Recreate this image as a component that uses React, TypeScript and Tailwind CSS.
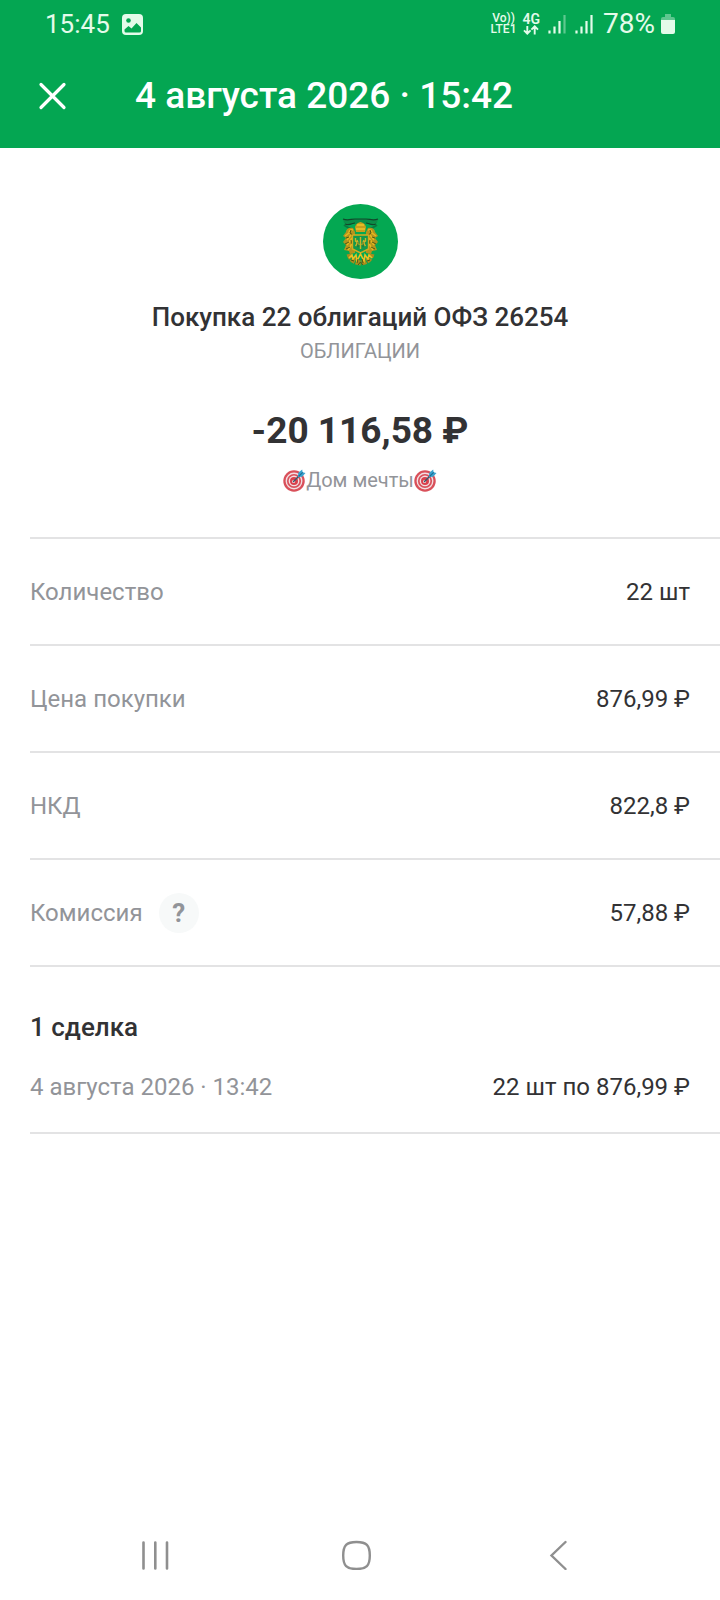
import type { ReactNode } from "react";

function Target() {
  return (
    <svg viewBox="0 0 24 24" className="size-[23px] shrink-0" role="img" aria-label="🎯">
      <circle cx="11.5" cy="12.5" r="11.2" fill="#d9505a" />
      <circle cx="11.5" cy="12.5" r="8.8" fill="#f3dfe2" />
      <circle cx="11.5" cy="12.5" r="7.4" fill="#d9505a" />
      <circle cx="11.5" cy="12.5" r="5.6" fill="#f3dfe2" />
      <circle cx="11.5" cy="12.5" r="4.2" fill="#d9404c" />
      <circle cx="11" cy="13" r="1.6" fill="#f3dfe2" />
      <path d="M11 13 18.5 5.5" stroke="#39586b" strokeWidth="1.6" strokeLinecap="round" />
      <path d="M15.500 8.300 16 3.800 20 .4l.5 3 3 .7-3.500 4Z" fill="#38a3cf" />
      <path d="m16.400 7.600 4.200-4" stroke="#1f6f96" strokeWidth="1.200" />
    </svg>
  );
}

function Emblem() {
  return (
    <svg viewBox="0 0 75 75" className="size-[75px]" role="img" aria-label="ОФЗ">
      <circle cx="37.5" cy="37.5" r="37.5" fill="#04a852" />
      <path d="M20 15c5 2 8 0 12 0h11c4 0 7 2 12 0l-1 4c-5 3-8 0-12 1h-9c-4-1-7 2-12-1Z" fill="#0b8d48" />
      <path d="M20 15c5 2 8 0 12 0h11c4 0 7 2 12 0M22 20c5 2 7-1 10-1m21 1c-5 2-7-1-10-1" stroke="#12472a" strokeWidth="1.2" fill="none" />
      <path d="M21 21q4 3 8 4m25-4q-4 3-8 4" stroke="#0b7a3e" strokeWidth="2" fill="none" />
      <path d="M32 23q1-4 5.500-5 4.500 1 5.500 5l-1 5h-9Z" fill="#c99f1c" />
      <path d="M34 21h7M33 25h9" stroke="#efc52a" strokeWidth="1.600" />
      <path d="M30 24c-4-1-7 1-7 4l-3 4 3 2-3 4 3 3-2 5 5 1 1 3 5-1V28Z" fill="#b4931d" />
      <path d="M45 24c4-1 7 1 7 4l3 4-3 2 3 4-3 3 2 5-5 1-1 3-5-1V28Z" fill="#b4931d" />
      <g stroke="#e6b81f" strokeWidth="1.500" fill="none">
        <path d="M30 26q-4-1-4 3l-4 3m6-1-4 5m5-2-5 7m6-3-5 8" />
        <path d="M45 26q4-1 4 3l4 3m-6-1 4 5m-5-2 5 7m-6-3 5 8" />
      </g>
      <g stroke="#4d5a17" strokeWidth="1" fill="none">
        <path d="m28 26-1 3 3 2m-7 3 3-1m-4 7 4-2m-3 7 4-2m1-7 1 4" />
        <path d="m47 26 1 3-3 2m7 3-3-1m4 7-4-2m3 7-4-2m-1-7-1 4" />
      </g>
      <path d="M29.500 31h16v14l-8 4-8-4Z" fill="#12994b" stroke="#d3aa20" strokeWidth="1.400" />
      <path d="M32.500 34v3q3 1 0 5m5-9v12m5-11v3q-3 1 0 5M34 36l2 5m5-5-2 5" stroke="#c9b32a" strokeWidth="1.400" fill="none" />
      <path d="M35 38v5m5-5v5" stroke="#33621f" strokeWidth=".8" />
      <path d="M26 50q2 8 11.500 9Q47 58 49 50" stroke="#a98c1c" strokeWidth="5" strokeDasharray="4.500 1" fill="none" />
      <path d="m26 54 3-3 1 4 3-4 1 6 3.500-7 3.500 7 1-6 3 4 1-4 3 3" stroke="#ecc023" strokeWidth="1.600" fill="none" />
      <path d="m28 56 3 1m3 2 1-4m5 4-1-4m5 2 3-1m-12 5 2.500-3 2.500 3" stroke="#4f5717" strokeWidth="1" fill="none" />
    </svg>
  );
}

function Signal({ weak = false }: { weak?: boolean }) {
  return (
    <svg viewBox="0 0 18 20" className="h-5 w-[18px]" aria-hidden="true" stroke="#e4fbea" strokeWidth="2.200">
      <path d="M1.500 16.500V19.500M6.500 12.500V19.500M11.500 7V19.500" />
      <path d="M16.500 1V19.500" opacity={weak ? 0.4 : 1} />
    </svg>
  );
}

function StatusBar() {
  return (
    <div className="flex h-12 items-center justify-between pr-[45px] pl-[45px] text-[#e4fbea]">
      <div className="flex items-center gap-3">
        <span className="text-[26px] leading-8">15:45</span>
        <svg viewBox="0 0 21 21" className="size-[21px]" role="img" aria-label="Изображение">
          <rect width="21" height="21" rx="4" fill="#e4fbea" />
          <circle cx="6.500" cy="6.500" r="2.300" fill="#04a652" />
          <path d="m2.500 15.500 4-3.500 3 2.500 5-5.500 4.500 4.500v3.500q0 1.500-1.500 1.500h-13.500q-1.500 0-1.500-1.500Z" fill="#04a652" />
        </svg>
      </div>
      <div className="flex items-center">
        <div className="flex flex-col items-center text-[12px] leading-[11px] font-medium">
          <span>Vo))</span>
          <span>LTE1</span>
        </div>
        <div className="ml-1.5 flex flex-col items-center">
          <span className="text-[14px] leading-[12px] font-semibold">4G</span>
          <svg viewBox="0 0 16 10" className="h-2.5 w-4" fill="none" stroke="#e4fbea" strokeWidth="1.900" aria-hidden="true">
            <path d="M4.300 1v7.500M1 5.300l3.300 3.300 3.300-3.300M11.700 9.500V1.500M8.400 4.700l3.300-3.300L15 4.700" />
          </svg>
        </div>
        <div className="ml-2 flex gap-[9px]">
          <Signal weak />
          <Signal />
        </div>
        <span className="ml-2.5 text-[28px] leading-8">78%</span>
        <svg viewBox="0 0 14 20" className="ml-1.5 h-5 w-3.5" role="img" aria-label="Батарея">
          <path d="M4 0h6v3h2q2 0 2 2v3H0V5q0-2 2-2h2Z" fill="#e4fbea" opacity=".4" />
          <path d="M0 6h14v12q0 2-2 2H2q-2 0-2-2Z" fill="#e4fbea" />
        </svg>
      </div>
    </div>
  );
}

function Row({ label, value, hint }: { label: string; value: string; hint?: ReactNode }) {
  return (
    <div className="flex h-[107px] items-center justify-between border-b-2 border-[#e3e3e4] pr-[30px]">
      <dt className="flex items-center gap-4 text-[#929499]">
        {label}
        {hint}
      </dt>
      <dd>{value}</dd>
    </div>
  );
}

export default function App() {
  return (
    <div className="flex min-h-screen flex-col bg-white font-['Roboto','Noto_Sans',sans-serif] text-[#323234]">
      <header className="bg-[#04a652]">
        <StatusBar />
        <div className="flex h-[100px] items-center pb-1 pl-9 text-white">
          <button type="button" aria-label="Закрыть" className="flex size-8 items-center justify-center">
            <svg viewBox="0 0 32 32" className="size-8" stroke="currentColor" strokeWidth="3.200" strokeLinecap="round">
              <path d="M5 4.500 28 27.500M28 4.500 5 27.500" />
            </svg>
          </button>
          <h1 className="ml-[67px] text-[37px] leading-[44px] font-medium">4 августа 2026 · 15:42</h1>
        </div>
      </header>

      <main>
        <section className="flex flex-col items-center pt-14 pb-[43px] text-center">
          <Emblem />
          <h2 className="mt-[22px] text-[26px] leading-8 font-medium">Покупка 22 облигаций ОФЗ 26254</h2>
          <p className="mt-1 text-[20px] leading-7 text-[#929499]">ОБЛИГАЦИИ</p>
          <p className="mt-11 text-[37px] leading-[44px] font-bold">-20 116,58 ₽</p>
          <p className="mt-[13px] flex items-center text-[20px] leading-7 text-[#929499]">
            <Target />
            Дом мечты
            <Target />
          </p>
        </section>

        <dl className="ml-[30px] border-t-2 border-[#e3e3e4] text-[24px] leading-8">
          <Row label="Количество" value="22 шт" />
          <Row label="Цена покупки" value="876,99 ₽" />
          <Row label="НКД" value="822,8 ₽" />
          <Row
            label="Комиссия"
            value="57,88 ₽"
            hint={
              <button
                type="button"
                aria-label="О комиссии"
                className="flex size-10 items-center justify-center rounded-full bg-[#f7f9f9] text-[26px] leading-8 font-bold text-[#929499]"
              >
                ?
              </button>
            }
          />
        </dl>

        <section className="ml-[30px] border-b-2 border-[#e3e3e4] pt-11 pr-[30px] pb-[29px]">
          <h2 className="text-[26px] leading-8 font-medium">1 сделка</h2>
          <div className="mt-7 flex justify-between text-[24px] leading-8">
            <span className="text-[#929499]">4 августа 2026 · 13:42</span>
            <span>22 шт по 876,99 ₽</span>
          </div>
        </section>
      </main>

      <nav className="mt-auto grid h-[90px] grid-cols-3 pr-[60px] pl-[54px] text-[#8f8f8f]">
        <button type="button" aria-label="Недавние" className="flex items-center justify-center">
          <svg viewBox="0 0 30 30" className="size-[30px]" stroke="currentColor" strokeWidth="2.600" strokeLinecap="round">
            <path d="M3.500 2.500v26M15.300 2.500v26M27 2.500v26" />
          </svg>
        </button>
        <button type="button" aria-label="Домой" className="flex items-center justify-center">
          <svg viewBox="0 0 30 30" className="size-[30px]" fill="none" stroke="currentColor" strokeWidth="2.400">
            <path d="M14.500 2C24.500 2 27.800 5.200 27.800 15.500S24.500 29 14.500 29 1.200 25.800 1.200 15.500 4.500 2 14.500 2Z" />
          </svg>
        </button>
        <button type="button" aria-label="Назад" className="flex items-center justify-center">
          <svg viewBox="0 0 30 30" className="size-[30px]" fill="none" stroke="currentColor" strokeWidth="2.400" strokeLinecap="round">
            <path d="M21.500 2 7.500 15.500 21.500 29" />
          </svg>
        </button>
      </nav>
    </div>
  );
}
